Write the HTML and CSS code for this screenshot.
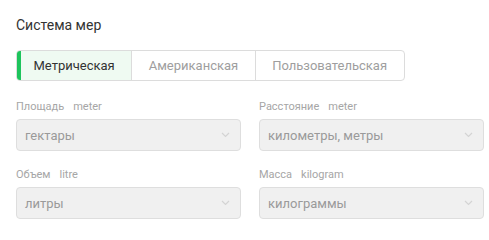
FILE: index.html
```html
<!DOCTYPE html>
<html lang="ru">
<head>
<meta charset="utf-8">
<link rel="stylesheet" href="styles.css">
</head>
<body>
<div class="panel">
  <div class="title">Система мер</div>
  <div class="seg">
    <div class="seg-item active">Метрическая</div>
    <div class="seg-item">Американская</div>
    <div class="seg-item">Пользовательская</div>
  </div>
  <div class="grid">
    <div class="field">
      <div class="label">Площадь<span class="unit">meter</span></div>
      <div class="select"><span>гектары</span>
        <svg class="chev" width="9" height="6" viewBox="0 0 9 6"><path d="M1 1l3.5 3.5L8 1" fill="none" stroke="#d4d4d4" stroke-width="1.2"/></svg>
      </div>
    </div>
    <div class="field">
      <div class="label">Расстояние<span class="unit">meter</span></div>
      <div class="select"><span>километры, метры</span>
        <svg class="chev" width="9" height="6" viewBox="0 0 9 6"><path d="M1 1l3.5 3.5L8 1" fill="none" stroke="#d4d4d4" stroke-width="1.2"/></svg>
      </div>
    </div>
    <div class="field">
      <div class="label">Объем<span class="unit">litre</span></div>
      <div class="select"><span>литры</span>
        <svg class="chev" width="9" height="6" viewBox="0 0 9 6"><path d="M1 1l3.5 3.5L8 1" fill="none" stroke="#d4d4d4" stroke-width="1.2"/></svg>
      </div>
    </div>
    <div class="field">
      <div class="label">Масса<span class="unit">kilogram</span></div>
      <div class="select"><span>килограммы</span>
        <svg class="chev" width="9" height="6" viewBox="0 0 9 6"><path d="M1 1l3.5 3.5L8 1" fill="none" stroke="#d4d4d4" stroke-width="1.2"/></svg>
      </div>
    </div>
  </div>
</div>
</body>
</html>
```
FILE: styles.css
```css
html, body {
  margin: 0;
  padding: 0;
  background: #fff;
}
body {
  font-family: Roboto, "Noto Sans", sans-serif;
  color: #333;
}
.panel {
  width: 468px;
  padding: 15px 0 0 16px;
}
.title {
  font-size: 14px;
  line-height: 20px;
  color: #333;
}
.seg {
  display: flex;
  margin-top: 15px;
  width: max-content;
  border: 1px solid #dcdcdc;
  border-radius: 4px;
  overflow: hidden;
}
.seg-item {
  height: 29px;
  line-height: 29px;
  padding: 0 16.5px;
  font-size: 13px;
  color: #9e9e9e;
  border-left: 1px solid #dcdcdc;
}
.seg-item:first-child {
  border-left: none;
}
.seg-item.active {
  color: #333;
  background: #effaf2;
  box-shadow: inset 4px 0 0 #1dc45c;
}
.grid {
  display: grid;
  grid-template-columns: 225px 225px;
  column-gap: 18px;
  row-gap: 17px;
  margin-top: 19px;
}
.label {
  font-size: 11px;
  line-height: 14px;
  color: #a6a6a6;
  margin-bottom: 5px;
}
.unit {
  margin-left: 9px;
}
.select {
  height: 30px;
  border: 1px solid #dedede;
  border-radius: 4px;
  background: #f0f0f0;
  display: flex;
  align-items: center;
  justify-content: space-between;
  padding: 0 10px 0 8px;
  font-size: 13px;
  color: #9a9a9a;
}
.chev {
  display: block;
}
```
